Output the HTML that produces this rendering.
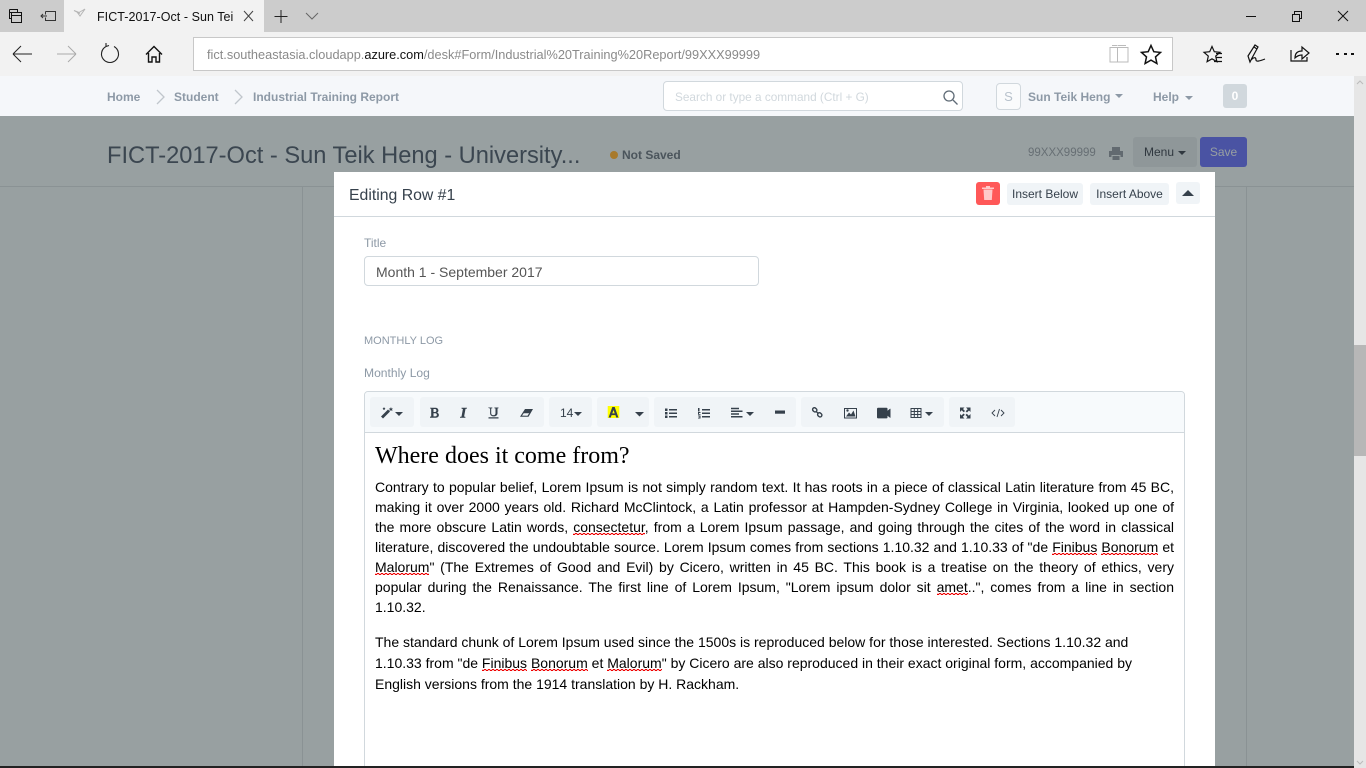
<!DOCTYPE html>
<html><head><meta charset="utf-8"><title>FICT-2017-Oct - Sun Teik Heng</title>
<style>
html,body{margin:0;padding:0;width:1366px;height:768px;overflow:hidden;background:#98a0a1;font-family:"Liberation Sans",sans-serif}
#p{position:relative;width:1366px;height:768px;overflow:hidden}
.a{position:absolute}
.t{position:absolute;white-space:nowrap;line-height:20px}
svg{position:absolute;overflow:visible}
.btn{position:absolute;background:#f0f4f7;border-radius:3px;color:#36414c;font-size:12px;line-height:22px;text-align:center;white-space:nowrap}
.grp{position:absolute;top:397px;height:30px;background:#f0f4f7;border-radius:3px}
.l{position:absolute;left:375px;width:799px;font-size:14px;line-height:20px;height:20px;color:#000;text-align:justify;text-align-last:justify;white-space:nowrap}
.n{text-align:left;text-align-last:left}
u{text-decoration:none;background:linear-gradient(135deg,transparent 35%,#e00 35%,#e00 65%,transparent 65%) 0 100%/4px 2px repeat-x,linear-gradient(45deg,transparent 35%,#e00 35%,#e00 65%,transparent 65%) 2px 100%/4px 2px repeat-x}
</style></head><body><div id="p">
<!-- browser chrome -->
<div class="a" style="left:0;top:0;width:1366px;height:32px;background:#cccccc"></div>
<div class="a" style="left:64px;top:0;width:200px;height:32px;background:#f2f2f2"></div>
<div class="a" style="left:0;top:32px;width:1366px;height:44px;background:#f2f2f2"></div>
<div class="a" style="left:193px;top:37px;width:978px;height:32px;background:#fff;border:1px solid #c8c8c8"></div>
<svg style="left:0;top:0" width="1366" height="76" fill="none" stroke="#111" stroke-width="1">
<path d="M9.500 9.500h8v3M11.500 12.500h10v10h-10zM11.500 15.500h10M9.500 9.500v9h2M9.500 12.500h2"/>
<path d="M45.500 11.500h10v9h-10v-3M45.500 14.500v-3M47 16h-6M43 14l-2 2 2 2" stroke="#333"/>
<path d="M74 10.500l3 1.500 3 4 5-7-6 3.500-5-2zM77 12l3 1.500" stroke="#b5b5b5"/>
<path d="M244 11l9 10M253 11l-9 10" stroke="#444"/>
<path d="M281 10v13M274.500 16.500h13" stroke="#222"/>
<path d="M306 13l6 6 6-6" stroke="#666"/>
<path d="M1246 16.500h10" stroke="#111"/>
<path d="M1292.500 14.500h7v7h-7zM1294.500 14v-2.500h7v7h-2"/>
<path d="M1338 11l10 10M1348 11l-10 10"/>
<path d="M13 54h19M13 54l8-8M13 54l8 8" stroke="#222"/>
<path d="M57 54h19M76 54l-8-8M76 54l-8 8" stroke="#aaa"/>
<path d="M106 46.500a8.500 8.500 0 1 0 8 0M106 46v-3M106 46.500l3-1" stroke="#222" stroke-width="1.100"/>
<path d="M146 54.500l8-8 8 8M148.500 53v9h3.500v-5h4v5h3.500v-9" stroke-width="1.400"/>
<path d="M1110 47.500h7.500v14.500h-7.500zM1128 47.500h-10.500v14.500h10.500zM1112 45.500h5.500M1118 45.500h8" stroke="#bbb"/>
<path d="M1151 45.500l2.800 6.200 6.700.7-5 4.500 1.400 6.600-5.900-3.400-5.900 3.400 1.400-6.600-5-4.500 6.700-.7z" stroke-width="1.500"/>
<path d="M1212 46.500l2.300 5.200 5.700.6-4.300 3.800 1.200 5.600-4.900-2.900-4.900 2.900 1.200-5.600-4.300-3.800 5.700-.6z" stroke-width="1.200"/>
<path d="M1216 53.500h6M1216 57.500h6M1214 61.500h8" stroke-width="1.200"/>
<path d="M1250 62l-2-6 7-11 3 2-6 11zM1257 49l-3-2M1251 60c4-4 5-2 5 0 0 2 4 1 9-1" stroke-width="1.200"/>
<path d="M1291 50v11h16v-4M1295 58c0-5 3-7 7-7v-4l7 6-7 6v-4c-3 0-5 1-7 3z" stroke-width="1.200"/>
</svg>
<div class="a" style="left:1336px;top:53px;width:3px;height:2px;background:#111"></div>
<div class="a" style="left:1344px;top:53px;width:3px;height:2px;background:#111"></div>
<div class="a" style="left:1351px;top:53px;width:3px;height:2px;background:#111"></div>
<div class="t" style="left:97px;top:7px;font-size:12.500px;color:#111;letter-spacing:.05px">FICT-2017-Oct - Sun Tei</div>
<div class="t" style="left:207px;top:45px;font-size:12.750px;color:#8a8a8a">fict.southeastasia.cloudapp.<span style="color:#111">azure.com</span>/desk#Form/Industrial%20Training%20Report/99XXX99999</div>
<!-- top nav -->
<div class="a" style="left:0;top:76px;width:1354px;height:40px;background:#f5f7fa"></div>
<div class="t" style="left:107px;top:87px;font-size:12px;font-weight:bold;color:#8d99a6">Home</div>
<svg style="left:0;top:0" width="400" height="116" fill="none" stroke="#c0c6cc" stroke-width="1.300"><path d="M157 90l7 7-7 7M235 90l7 7-7 7"/></svg>
<div class="t" style="left:174px;top:87px;font-size:12px;font-weight:bold;color:#8d99a6">Student</div>
<div class="t" style="left:253px;top:87px;font-size:12px;font-weight:bold;color:#8d99a6">Industrial Training Report</div>
<div class="a" style="left:663px;top:81px;width:298px;height:28px;background:#fff;border:1px solid #d1d8dd;border-radius:4px"></div>
<div class="t" style="left:675px;top:87px;font-size:11.800px;color:#d1d8dd">Search or type a command (Ctrl + G)</div>
<svg style="left:0;top:0" width="1000" height="116" fill="none" stroke="#5f6b76" stroke-width="1.300"><circle cx="949" cy="96" r="5"/><path d="M953 100l4.500 4.500"/></svg>
<div class="a" style="left:996px;top:83px;width:23px;height:25px;background:#fafbfc;border:1px solid #d1d8dd;border-radius:4px;color:#b8c2cc;font-size:13px;line-height:25px;text-align:center">S</div>
<div class="t" style="left:1028px;top:87px;font-size:12px;font-weight:bold;color:#8d99a6">Sun Teik Heng</div>
<div class="a" style="left:1115px;top:94px;border:4px solid transparent;border-top-color:#8d99a6;border-bottom:0"></div>
<div class="t" style="left:1153px;top:87px;font-size:12px;font-weight:bold;color:#8d99a6">Help</div>
<div class="a" style="left:1185px;top:96px;border:4px solid transparent;border-top-color:#8d99a6;border-bottom:0"></div>
<div class="a" style="left:1223px;top:84px;width:24px;height:24px;background:#d1d8dd;border-radius:3px;color:#fff;font-size:12px;font-weight:bold;line-height:24px;text-align:center">0</div>
<!-- scrollbar -->
<div class="a" style="left:1354px;top:76px;width:12px;height:692px;background:#e6e6e6"></div>
<div class="a" style="left:1354px;top:345px;width:12px;height:111px;background:#b7b7b7"></div>
<svg style="left:0;top:0" width="1366" height="768" fill="none" stroke="#bbb"><path d="M1357 84l3-3 3 3M1357 761l3 3 3-3"/></svg>
<!-- page behind overlay -->
<div class="a" style="left:0;top:116px;width:1354px;height:650px;background:#98a0a1"></div>
<div class="t" style="left:107px;top:141px;font-size:23.650px;line-height:30px;color:#3b4650">FICT-2017-Oct - Sun Teik Heng - University...</div>
<div class="a" style="left:610px;top:151px;width:8px;height:8px;border-radius:50%;background:#a87a2c"></div>
<div class="t" style="left:622px;top:145px;font-size:12px;font-weight:bold;color:#4b555c">Not Saved</div>
<div class="t" style="left:1028px;top:143px;font-size:11.500px;color:#676f74">99XXX99999</div>
<svg style="left:1109px;top:147px" width="14" height="13" fill="#626a70"><path d="M3 0h8v4h-8zM0 4h14v6h-2.500v-2h-9v2h-2.500zM3.500 9h7v4h-7z"/></svg>
<div class="a" style="left:1133px;top:137px;width:64px;height:30px;background:#8f9799;border-radius:3px;color:#30383f;font-size:12px;line-height:30px;padding-left:11px;box-sizing:border-box">Menu</div>
<div class="a" style="left:1178px;top:151px;border:4px solid transparent;border-top-color:#30383f;border-bottom:0"></div>
<div class="a" style="left:1200px;top:137px;width:47px;height:30px;background:#4a53a3;border-radius:3px;color:#98a0a1;font-size:12px;line-height:30px;text-align:center">Save</div>
<div class="a" style="left:0;top:186px;width:1354px;height:1px;background:#8a9294"></div>
<div class="a" style="left:302px;top:186px;width:1px;height:580px;background:#8a9294"></div>
<div class="a" style="left:1246px;top:186px;width:1px;height:580px;background:#8a9294"></div>
<!-- modal -->
<div class="a" style="left:334px;top:172px;width:881px;height:594px;background:#fff"></div>
<div class="a" style="left:334px;top:216px;width:881px;height:1px;background:#d1d8dd"></div>
<div class="t" style="left:349px;top:186px;font-size:15.800px;color:#36414c">Editing Row #1</div>
<div class="a" style="left:976px;top:182px;width:24px;height:23px;background:#ff5858;border-radius:3px"></div>
<svg style="left:981px;top:186px" width="14" height="16"><path d="M2.500 3.500h9l-.7 10.500h-7.600z" fill="#ffc9c9"/><path d="M1 1.500h12v1.500h-12z" fill="#ffc9c9"/><path d="M5 0h4v1.500h-4z" fill="#ffc9c9"/></svg>
<div class="btn" style="left:1007px;top:183px;width:76px">Insert Below</div>
<div class="btn" style="left:1090px;top:183px;width:79px">Insert Above</div>
<div class="btn" style="left:1176px;top:182px;width:24px;height:22px"></div>
<div class="a" style="left:1182px;top:190px;border:6px solid transparent;border-bottom-color:#36414c;border-top:0"></div>
<div class="t" style="left:364px;top:233px;font-size:12px;color:#8d99a6">Title</div>
<div class="a" style="left:364px;top:256px;width:393px;height:28px;border:1px solid #d1d8dd;border-radius:4px;background:#fff"></div>
<div class="t" style="left:376px;top:262px;font-size:14px;color:#555">Month 1 - September 2017</div>
<div class="t" style="left:364px;top:331px;font-size:11px;color:#8d99a6">MONTHLY LOG</div>
<div class="t" style="left:364px;top:363px;font-size:12.100px;color:#8d99a6">Monthly Log</div>
<!-- editor -->
<div class="a" style="left:364px;top:391px;width:819px;height:380px;border:1px solid #d1d8dd;border-radius:4px 4px 0 0;background:#fff"></div>
<div class="a" style="left:365px;top:392px;width:819px;height:40px;background:#f7fafc;border-bottom:1px solid #d1d8dd;border-radius:3px 3px 0 0"></div>
<div class="grp" style="left:370px;width:44px"></div>
<div class="grp" style="left:420px;width:124px"></div>
<div class="grp" style="left:549px;width:43px"></div>
<div class="grp" style="left:597px;width:52px"></div>
<div class="grp" style="left:654px;width:142px"></div>
<div class="grp" style="left:801px;width:143px"></div>
<div class="grp" style="left:949px;width:66px"></div>
<svg style="left:0;top:0" width="1366" height="768" fill="#36414c">
<path d="M381 416.500l7-7 2 2-7 7zM391 407l.5 1.500h1.500l-1 1 .5 1.500-1.500-.8-1.500.8.300-1.500-1-1h1.500zM384 407l.5 1h1l-.7.8.2 1.200-1-.6-1 .6.200-1.200-.7-.8h1z"/>
<path d="M395 412h8l-4 4z"/>
<path d="M430 407.700h5.500c3.300 0 3.800 4.200 1.500 4.900 2.800.7 2.600 5.100-1.100 5.100h-5.900v-1l1.200-.3v-7.700l-1.200-.3zM433.500 409v3h1.500c1.900 0 1.900-3 0-3zM433.500 413.200v3.200h1.800c2.100 0 2.100-3.200 0-3.200z"/>
<path d="M461.500 407.700h5.500v.8l-1.500.4-1.400 7.600 1.300.4v.9h-5.400v-.9l1.500-.3 1.400-7.600-1.400-.4z"/>
<path d="M488 407.500h4.300v.8l-1.100.2v4.700c0 2.600 4.300 2.600 4.300 0v-4.700l-1.100-.2v-.8h4.100v.8l-1 .2v4.700c0 4.300-7.400 4.300-7.400 0v-4.700l-1.100-.2zM488.500 417.300h10v1.200h-10z"/>
<path d="M525 409h8l-4.500 7.700h-8.500zM526 410l-4 5.600 5.500.2 3.800-5.800z" fill-rule="evenodd"/><path d="M522.500 413l-1.600 2.700h6.400l1.700-2.700z" fill="#36414c" opacity="0"/><path d="M526 409.500h6l-2.400 3.800h-6.100z"/>
<path d="M574 412h8l-4 4z"/>
<path d="M607.700 406h11.600v12h-11.600z" fill="#ff0"/>
<path d="M612.300 407h2.400l3.700 10.500h-2.200l-.8-2.400h-3.800l-.8 2.400h-2.200zM613.500 410l-1.200 3.400h2.400z" fill-rule="evenodd"/>
<path d="M635 412h9l-4.500 4.500z"/>
<path d="M665 408.500h2.500v2.500h-2.500zM669 409h8v1.500h-8zM665 412h2.500v2.500h-2.500zM669 412.500h8v1.500h-8zM665 415.500h2.500v2.500h-2.500zM669 416h8v1.500h-8z"/>
<path d="M702 409h8v1.500h-8zM702 412.500h8v1.500h-8zM702 416h8v1.500h-8zM698 408h1.500v3.500h-1.500zM698 412h2.500v1h-1.500v1h1.500v.7h-2.500zM698 415.500h2.500v3h-2.500v-.7h1.500v-.5h-1v-.5h1v-.6h-1.500z"/>
<path d="M731 407.700h8v1.500h-8zM731 410.500h11.500v1.500h-11.500zM731 413.300h8v1.500h-8zM731 416h11.500v1.500h-11.500z"/>
<path d="M746 412h8l-4 4z"/>
<path d="M775 410.500h10v3.200h-10z"/>
<path d="M878 407.700h8.500c.8 0 1 .5 1 1v2l2.500-2h.5v9h-.5l-2.500-2v1.700c0 .5-.2 1-1 1h-8.500c-.5 0-1-.5-1-1v-8.700c0-.5.500-1 1-1z"/>
<path d="M925 412h8l-4 4z"/>
<path d="M960 407.500h4.500l-1.500 1.500 2 2-1.300 1.300-2-2-1.700 1.700zM970.500 407.500v4.500l-1.500-1.500-2 2-1.300-1.300 2-2-1.700-1.700zM960 418.500v-4.500l1.500 1.500 2-2 1.300 1.300-2 2 1.700 1.700zM970.500 418.500h-4.500l1.500-1.500-2-2 1.300-1.300 2 2 1.700-1.700z"/>
<path d="M846 416.500l3-4 2 2 2.500-4 2 6z"/>
<circle cx="847.500" cy="410.500" r="1.200"/>
</svg>
<svg style="left:0;top:0" width="1366" height="768" fill="none" stroke="#36414c">
<rect x="812.500" y="408" width="4.500" height="3.600" rx="1.800" transform="rotate(40 814.700 409.800)" stroke-width="1.400"/>
<rect x="817.500" y="413" width="4.500" height="3.600" rx="1.800" transform="rotate(40 819.700 414.800)" stroke-width="1.400"/>
<path d="M816 411.500l2.500 2" stroke-width="1.300"/>
<rect x="844.500" y="408.500" width="12" height="9.500" stroke-width="1"/>
<path d="M911 408.500h10v9h-10zM911 411.500h10M911 414.500h10M914.300 408.500v9M917.700 408.500v9" stroke-width="1"/>
<path d="M995 410l-3 3 3 3M1001 410l3 3-3 3M999.500 409l-2.500 8" stroke-width=".9"/>
</svg>
<div class="t" style="left:560px;top:403px;font-size:12px;color:#36414c">14</div>
<!-- content -->
<div class="t" style="left:375px;top:441px;font-family:'Liberation Serif',serif;font-size:24px;line-height:30px;color:#000">Where does it come from?</div>
<div class="l" style="top:477px">Contrary to popular belief, Lorem Ipsum is not simply random text. It has roots in a piece of classical Latin literature from 45 BC,</div>
<div class="l" style="top:497px">making it over 2000 years old. Richard McClintock, a Latin professor at Hampden-Sydney College in Virginia, looked up one of</div>
<div class="l" style="top:517px">the more obscure Latin words, <u>consectetur</u>, from a Lorem Ipsum passage, and going through the cites of the word in classical</div>
<div class="l" style="top:537px">literature, discovered the undoubtable source. Lorem Ipsum comes from sections 1.10.32 and 1.10.33 of "de <u>Finibus</u> <u>Bonorum</u> et</div>
<div class="l" style="top:557px"><u>Malorum</u>" (The Extremes of Good and Evil) by Cicero, written in 45 BC. This book is a treatise on the theory of ethics, very</div>
<div class="l" style="top:577px">popular during the Renaissance. The first line of Lorem Ipsum, "Lorem ipsum dolor sit <u>amet</u>..", comes from a line in section</div>
<div class="l n" style="top:597px">1.10.32.</div>
<div class="l n" style="top:632px">The standard chunk of Lorem Ipsum used since the 1500s is reproduced below for those interested. Sections 1.10.32 and</div>
<div class="l n" style="top:653px">1.10.33 from "de <u>Finibus</u> <u>Bonorum</u> et <u>Malorum</u>" by Cicero are also reproduced in their exact original form, accompanied by</div>
<div class="l n" style="top:674px">English versions from the 1914 translation by H. Rackham.</div>
<!-- bottom bar -->
<div class="a" style="left:0;top:766px;width:1354px;height:2px;background:#222"></div>
</div></body></html>
